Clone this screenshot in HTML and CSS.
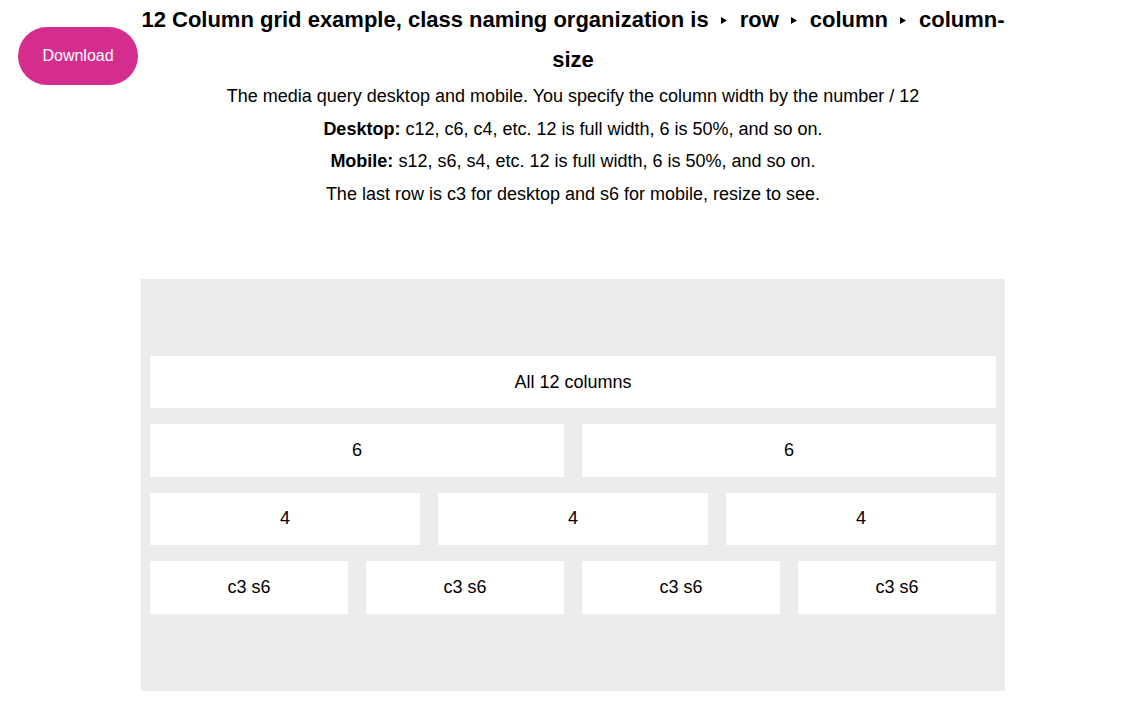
FILE: index.html
```html
<!DOCTYPE html>
<html>
<head>
<meta charset="utf-8">
<link rel="stylesheet" href="styles.css">
</head>
<body>
<a class="download" href="#">Download</a>
<main class="page">
  <h1 class="title">12 Column grid example, class naming organization is<svg class="sep" viewBox="0 0 6 7" aria-hidden="true"><polygon points="0,0 6,3.5 0,7"/></svg>row<svg class="sep" viewBox="0 0 6 7" aria-hidden="true"><polygon points="0,0 6,3.5 0,7"/></svg>column<svg class="sep" viewBox="0 0 6 7" aria-hidden="true"><polygon points="0,0 6,3.5 0,7"/></svg><span>column-</span><span>size</span></h1>
  <p class="line">The media query desktop and mobile. You specify the column width by the number / 12</p>
  <p class="line"><b>Desktop:</b> c12, c6, c4, etc. 12 is full width, 6 is 50%, and so on.</p>
  <p class="line"><b>Mobile:</b> s12, s6, s4, etc. 12 is full width, 6 is 50%, and so on.</p>
  <p class="line">The last row is c3 for desktop and s6 for mobile, resize to see.</p>
  <section class="grid">
    <div class="row"><div class="col c12"><div class="cell">All 12 columns</div></div></div>
    <div class="row">
      <div class="col c6"><div class="cell">6</div></div>
      <div class="col c6"><div class="cell">6</div></div>
    </div>
    <div class="row">
      <div class="col c4"><div class="cell">4</div></div>
      <div class="col c4"><div class="cell">4</div></div>
      <div class="col c4"><div class="cell">4</div></div>
    </div>
    <div class="row">
      <div class="col c3"><div class="cell">c3 s6</div></div>
      <div class="col c3"><div class="cell">c3 s6</div></div>
      <div class="col c3"><div class="cell">c3 s6</div></div>
      <div class="col c3"><div class="cell">c3 s6</div></div>
    </div>
  </section>
</main>
</body>
</html>
```
FILE: styles.css
```css
html, body {
  margin: 0;
  padding: 0;
  background: #ffffff;
  color: #000000;
  font-family: "Liberation Sans", Arial, sans-serif;
}
.download {
  position: absolute;
  left: 18px;
  top: 27px;
  width: 120px;
  height: 58px;
  border-radius: 29px;
  background: #d52d8e;
  color: #ffffff;
  font-size: 16px;
  text-decoration: none;
  display: flex;
  align-items: center;
  justify-content: center;
}
.page {
  width: 864px;
  margin-left: 141px;
  text-align: center;
}
.title {
  margin: 0;
  font-size: 22px;
  font-weight: bold;
  line-height: 40px;
}
.sep {
  display: inline-block;
  width: 6px;
  height: 7px;
  fill: #000000;
  vertical-align: 3px;
  margin: 0 13px 0 12px;
}
.line {
  margin: 0;
  font-size: 18px;
  line-height: 32.5px;
}
.grid {
  margin-top: 69px;
  background: #ececec;
  padding: 69px 0;
}
.row {
  display: flex;
}
.col {
  box-sizing: border-box;
  padding: 8px 9px;
}
.c12 { width: 100%; }
.c6 { width: 50%; }
.c4 { width: 33.3333%; }
.c3 { width: 25%; }
.cell {
  background: #ffffff;
  height: 52.4px;
  display: flex;
  align-items: center;
  justify-content: center;
  font-size: 18px;
}
```
